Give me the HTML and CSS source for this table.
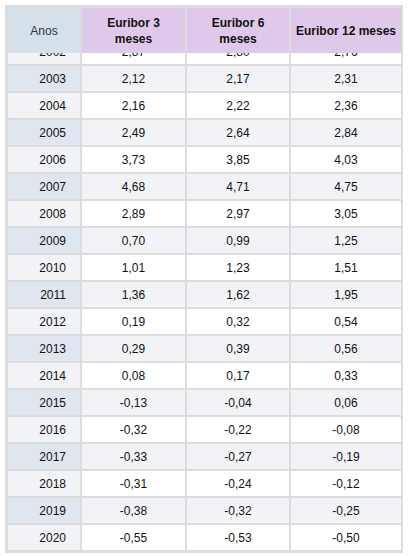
FILE: index.html
```html
<!DOCTYPE html>
<html lang="pt">
<head>
    <meta charset="UTF-8">
    <meta name="viewport" content="width=device-width, initial-scale=1.0">
    <title>Euribor - médias anuais</title>
    <link rel="stylesheet" href="styles.css">
</head>
<body>

<div class="table-frame" id="tableFrame">
    <table class="rates">
        <colgroup>
            <col class="col-year">
            <col class="col-3m">
            <col class="col-6m">
            <col class="col-12m">
        </colgroup>
        <thead>
            <tr>
                <th class="th-year">Anos</th>
                <th>Euribor 3 meses</th>
                <th>Euribor 6 meses</th>
                <th class="th-wide">Euribor 12 meses</th>
            </tr>
        </thead>
        <tbody id="ratesBody"></tbody>
    </table>
</div>

<script>
    const rates = [
        ['2002', '2,87', '2,80', '2,76'],
        ['2003', '2,12', '2,17', '2,31'],
        ['2004', '2,16', '2,22', '2,36'],
        ['2005', '2,49', '2,64', '2,84'],
        ['2006', '3,73', '3,85', '4,03'],
        ['2007', '4,68', '4,71', '4,75'],
        ['2008', '2,89', '2,97', '3,05'],
        ['2009', '0,70', '0,99', '1,25'],
        ['2010', '1,01', '1,23', '1,51'],
        ['2011', '1,36', '1,62', '1,95'],
        ['2012', '0,19', '0,32', '0,54'],
        ['2013', '0,29', '0,39', '0,56'],
        ['2014', '0,08', '0,17', '0,33'],
        ['2015', '-0,13', '-0,04', '0,06'],
        ['2016', '-0,32', '-0,22', '-0,08'],
        ['2017', '-0,33', '-0,27', '-0,19'],
        ['2018', '-0,31', '-0,24', '-0,12'],
        ['2019', '-0,38', '-0,32', '-0,25'],
        ['2020', '-0,55', '-0,53', '-0,50']
    ];

    const body = document.getElementById('ratesBody');
    rates.forEach(row => {
        const tr = document.createElement('tr');
        tr.innerHTML = `
            <td class="year">${row[0]}</td>
            <td>${row[1]}</td>
            <td>${row[2]}</td>
            <td>${row[3]}</td>
        `;
        body.appendChild(tr);
    });

    // mostrar os anos mais recentes
    const frame = document.getElementById('tableFrame');
    frame.scrollTop = frame.scrollHeight;
</script>

</body>
</html>
```

FILE: styles.css
```css
body {
    margin: 5px;
    font-family: 'Liberation Sans', Arial, sans-serif;
    font-size: 12px;
    color: #111;
    background: #fff;
}
.table-frame {
    width: 398px;
    height: 546px;
    border: 1px solid #dcdcdc;
    background: #dcdcdc;
    overflow-y: auto;
    scrollbar-width: none;
}
.table-frame::-webkit-scrollbar {
    display: none;
}
.rates {
    width: 397px;
    table-layout: fixed;
    border-collapse: separate;
    border-spacing: 2px;
}
.col-year { width: 72px; }
.col-3m { width: 103px; }
.col-6m { width: 102px; }
.col-12m { width: 110px; }

.rates th {
    position: sticky;
    top: 2px;
    height: 45px;
    padding: 0 6px;
    box-sizing: border-box;
    background: #dec9ea;
    font-weight: bold;
    line-height: 16px;
    text-align: center;
    vertical-align: middle;
}
.rates th.th-wide {
    padding: 0 3px;
}
.rates th.th-year {
    background: #d5e0e8;
    font-weight: normal;
    color: #333;
}
.rates td {
    height: 25px;
    padding: 0;
    box-sizing: border-box;
    background: #fff;
    text-align: center;
    vertical-align: middle;
}
.rates td.year {
    text-align: right;
    padding-right: 14px;
    background: #f1f3f6;
}
.rates tbody tr:nth-child(even) td {
    background: #f2f3f7;
}
.rates tbody tr:nth-child(even) td.year {
    background: #dfe6ee;
}
```
